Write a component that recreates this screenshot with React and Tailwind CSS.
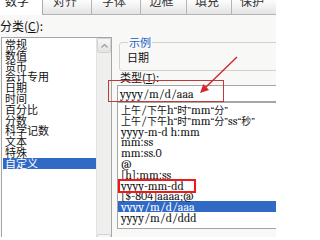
import React from "react";

const tabs = [
    { name: "数字", w: "w-[43px]", active: true },
    { name: "对齐", w: "w-[49px]" },
    { name: "字体", w: "w-[49px]" },
    { name: "边框", w: "w-[46px]" },
    { name: "填充", w: "w-[45px]" },
    { name: "保护", w: "w-[45px]" },
];

const categories = ["常规", "数值", "货币", "会计专用", "日期", "时间", "百分比", "分数", "科学记数", "文本", "特殊", "自定义"];

const formats = [
    "上午/下午h“时”mm“分”",
    "上午/下午h“时”mm“分”ss“秒”",
    "yyyy-m-d h:mm",
    "mm:ss",
    "mm:ss.0",
    "@",
    "[h]:mm:ss",
    "yyyy-mm-dd",
    "[$-804]aaaa;@",
    "yyyy/m/d/aaa",
    "yyyy/m/d/ddd",
];

// CJK runs in the CJK font, latin in a serif face (like SimSun's latin)
const Mixed = ({ text }) => {
    const parts = text.split(/([\u4e00-\u9fff]+|[\u201c\u201d])/).filter(Boolean);
    return parts.map((p, i) => {
        if (/[\u4e00-\u9fff]/.test(p))
            return <span key={i} className="font-['Noto_Sans_CJK_SC',sans-serif] text-[10px]">{p}</span>;
        if (/[\u201c\u201d]/.test(p))
            return <span key={i} className="font-serif text-[10px]">{p}</span>;
        return <span key={i} className="font-serif text-[12px]">{p}</span>;
    });
};

const Tabs = () => (
    <div className="flex h-[15px] overflow-hidden">
        {tabs.map((t) =>
            t.active ? (
                <div key={t.name} className={`${t.w} shrink-0 bg-white border-r border-[#a9a9a9] pl-[5px] text-[12px] leading-[12px] text-[#222]`}>
                    <span className="block -mt-[5px]">{t.name}</span>
                </div>
            ) : (
                <div
                    key={t.name}
                    className={`${t.w} shrink-0 flex justify-center bg-gradient-to-b from-[#fdfdfd] to-[#e4e4e4] border-r border-b border-[#b4b4b4] text-[12px] leading-[12px] text-[#333]`}
                >
                    <span className="block -mt-[5px] pr-[4px]">{t.name}</span>
                </div>
            )
        )}
    </div>
);

const ScrollButton = ({ up }) => (
    <div className="h-[15px] flex items-center justify-center bg-gradient-to-b from-[#f7f7f7] to-[#e3e3e3] border border-[#d3d3d3] rounded-[2px]">
        <svg width="7" height="4" viewBox="0 0 7 4">
            <path d={up ? "M0.5 3.5 L3.5 0.5 L6.5 3.5" : "M0.5 0.5 L3.5 3.5 L6.5 0.5"} fill="none" stroke="#9a9a9a" strokeWidth="1.2" />
        </svg>
    </div>
);

export default function App() {
    return (
        <div className="relative w-[276px] h-[237px] overflow-hidden bg-[#f8f8f6] text-[#111] font-['Noto_Sans_CJK_SC',sans-serif]">
            <Tabs />

            <div className="flex pl-[1px]">
                {/* Left: category list */}
                <div className="w-[111px] shrink-0">
                    <div className="h-[22px] -ml-[1px] pt-[4px] text-[12px] leading-[13px]">
                        分类(<span className="underline">C</span>):
                    </div>
                    <div className="flex h-[213px] border border-[#a5a5a5] bg-white">
                        <ul className="flex-1 pt-[1px] pl-[1px]">
                            {categories.map((c) => (
                                <li
                                    key={c}
                                    className={
                                        c === "自定义"
                                            ? "h-[10.8px] leading-[10.8px] text-[11px] pl-[2px] bg-[#316ac5] text-white"
                                            : "h-[10.8px] leading-[10.8px] text-[11px] pl-[2px]"
                                    }
                                >
                                    {c}
                                </li>
                            ))}
                        </ul>
                        <div className="w-[15px] flex flex-col bg-[#efefed] border-l border-[#e2e2e2]">
                            <ScrollButton up />
                            <div className="flex-1" />
                            <ScrollButton />
                        </div>
                    </div>
                </div>

                {/* Right: sample, type input and type list */}
                <div className="ml-[5px] flex-1 min-w-0">
                    <fieldset className="ml-[2px] mt-[21px] h-[35px] w-[170px] border border-[#d2d2cc] rounded-[3px] pl-[7px]">
                        <legend className="ml-[1px] px-[1px] text-[11px] leading-[12px] text-[#1d5bc8]">示例</legend>
                        <div className="pt-[3px] text-[11px] leading-[12px]">日期</div>
                    </fieldset>
                    <div className="h-[14px] ml-[3px] pt-[1px] text-[11px] leading-[11px]">
                        类型(<span className="underline">T</span>):
                    </div>
                    <div className="h-[17px] w-[170px] border border-[#a5a5a5] bg-white pl-[2px] text-[11px] leading-[15px]">
                        <Mixed text="yyyy/m/d/aaa" />
                    </div>
                    <ul className="h-[127px] w-[170px] border border-[#a5a5a5] bg-white pt-[1px]">
                        {formats.map((f) => (
                            <li
                                key={f}
                                className={
                                    f === "yyyy/m/d/aaa"
                                        ? "h-[10.8px] text-[11px] leading-[10.8px] pl-[3px] whitespace-nowrap bg-[#316ac5] text-white"
                                        : "h-[10.8px] text-[11px] leading-[10.8px] pl-[3px] whitespace-nowrap"
                                }
                            >
                                <Mixed text={f} />
                            </li>
                        ))}
                    </ul>
                </div>
            </div>

            {/* Annotations drawn over the dialog */}
            <div className="absolute left-[108px] top-[80px] w-[116px] h-[22px] border-[1.5px] border-[#bd3b3b]" />
            <div className="absolute left-[118px] top-[179px] w-[78px] h-[14px] border-2 border-[#f01818]" />
            <svg className="absolute left-[196px] top-[54px]" width="44" height="42" viewBox="0 0 44 42">
                <line x1="41" y1="3" x2="9" y2="34" stroke="#d6262b" strokeWidth="1.4" />
                <polygon points="4,39 7.4,30.1 13,35.9" fill="#d6262b" />
            </svg>
        </div>
    );
}
